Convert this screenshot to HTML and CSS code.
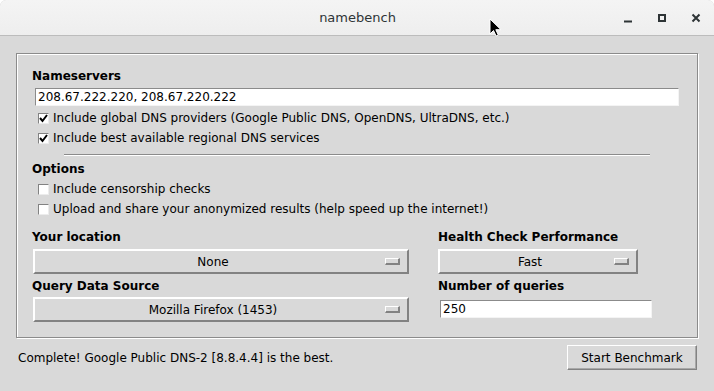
FILE: index.html
```html
<!DOCTYPE html>
<html lang="en">

<head>
    <meta charset="UTF-8">
    <title>namebench</title>
    <link rel="stylesheet" href="styles.css">
</head>

<body>
    <div class="titlebar">
        <span class="title">namebench</span>
        <div class="controls">
            <svg width="12" height="12" viewBox="0 0 12 12"><path d="M2 9.5h8" stroke="#2e3436" stroke-width="2" /></svg>
            <svg width="12" height="12" viewBox="0 0 12 12"><rect x="3" y="3" width="6" height="6" fill="none" stroke="#2e3436" stroke-width="2" /></svg>
            <svg width="12" height="12" viewBox="0 0 12 12"><path d="M2.5 2.5l7 7M9.5 2.5l-7 7" stroke="#2e3436" stroke-width="2" /></svg>
        </div>
        <svg class="cursor" width="13" height="19" viewBox="0 0 13 19">
            <path d="M1 1v15l3.5-3.5 2.6 5.5 2.2-1-2.5-5.3H12z" fill="#000" stroke="#fff" stroke-width="1" stroke-linejoin="round" />
        </svg>
    </div>

    <div class="window">
        <div class="frame">
            <div class="label">Nameservers</div>
            <div class="entry servers">208.67.222.220, 208.67.220.222</div>
            <div class="checks">
                <div class="check"><span class="box"><svg width="9" height="9" viewBox="0 0 9 9"><path d="M1 4l2.5 3L8 1" fill="none" stroke="#000" stroke-width="2" /></svg></span>Include global DNS providers (Google Public DNS, OpenDNS, UltraDNS, etc.)</div>
                <div class="check"><span class="box"><svg width="9" height="9" viewBox="0 0 9 9"><path d="M1 4l2.5 3L8 1" fill="none" stroke="#000" stroke-width="2" /></svg></span>Include best available regional DNS services</div>
            </div>
            <div class="separator"></div>
            <div class="label">Options</div>
            <div class="checks options">
                <div class="check"><span class="box"></span>Include censorship checks</div>
                <div class="check"><span class="box"></span>Upload and share your anonymized results (help speed up the internet!)</div>
            </div>
            <div class="settings">
                <div class="label">Your location</div>
                <div class="label">Health Check Performance</div>
                <div class="dropdown"><span class="value">None</span><span class="indicator"></span></div>
                <div class="dropdown small"><span class="value">Fast</span><span class="indicator"></span></div>
                <div class="label second">Query Data Source</div>
                <div class="label second">Number of queries</div>
                <div class="dropdown last"><span class="value">Mozilla Firefox (1453)</span><span class="indicator"></span></div>
                <div class="entry queries">250</div>
            </div>
        </div>
        <div class="statusbar">
            <span class="status">Complete! Google Public DNS-2 [8.8.4.4] is the best.</span>
            <button class="start">Start Benchmark</button>
        </div>
    </div>
</body>

</html>
```

FILE: styles.css
```css
html {
    background-color: #fff;
}

body {
    margin: 0;
    width: 714px;
    height: 391px;
    font-family: 'DejaVu Sans', sans-serif;
    font-size: 12px;
    color: #000;
    background-color: #d9d9d9;
    border-radius: 6px 6px 0 0;
    overflow: hidden;
}

/* title bar */
.titlebar {
    position: relative;
    height: 35px;
    display: flex;
    align-items: center;
    justify-content: center;
    background: linear-gradient(#f4f4f4, #eeeeee);
    border-bottom: 1px solid #bcbcbc;
    border-radius: 6px 6px 0 0;
}

.title {
    font-size: 13px;
    color: #2e3436;
    margin-left: 1px;
}

.controls {
    position: absolute;
    right: 12px;
    top: 12px;
    display: flex;
    gap: 22px;
}

.controls svg {
    display: block;
}

.cursor {
    position: absolute;
    left: 489px;
    top: 18px;
}

/* main frame */
.frame {
    box-sizing: border-box;
    height: 285px;
    margin: 17px 16px 0 16px;
    padding: 12px 0 0 15px;
    border: 1px solid #8b8b8b;
    box-shadow: inset 1px 1px #fff, 1px 1px #fff;
}

.label {
    font-weight: 700;
    line-height: 20px;
    height: 20px;
}

.entry {
    box-sizing: border-box;
    height: 18px;
    line-height: 16px;
    padding-left: 2px;
    background-color: #fff;
    border: 1px solid;
    border-color: #8b8b8b #f4f4f4 #f4f4f4 #8b8b8b;
}

.servers {
    width: 644px;
    margin: 2px 0 0 3px;
}

.checks {
    margin-top: 2px;
}

.checks.options {
    margin-top: 0;
}

.check {
    display: flex;
    align-items: center;
    height: 20px;
    padding-left: 6px;
    gap: 4px;
}

.box {
    box-sizing: border-box;
    width: 11px;
    height: 11px;
    display: flex;
    align-items: center;
    justify-content: center;
    background-color: #fff;
    border: 1px solid;
    border-color: #828282 #ececec #ececec #828282;
}

.box svg {
    display: block;
}

.separator {
    width: 586px;
    height: 1px;
    margin: 6px 0 3px 32px;
    background-color: #8b8b8b;
    border-bottom: 1px solid #fff;
}

.checks + .settings {
    margin-top: 8px;
}

.settings {
    display: grid;
    grid-template-columns: 377px 214px;
    column-gap: 29px;
    align-items: start;
}

.settings .second {
    margin-top: 2px;
}

.dropdown {
    box-sizing: border-box;
    height: 25px;
    margin: 2px 0 0 1px;
    display: flex;
    align-items: center;
    padding-right: 7px;
    border: 2px solid;
    border-color: #fff #828282 #828282 #fff;
}

.dropdown.last {
    margin-top: 1px;
}

.dropdown.small {
    width: 200px;
    margin-left: 0;
}

.value {
    flex: 1;
    text-align: center;
    padding-left: 6px;
}

.indicator {
    box-sizing: border-box;
    width: 15px;
    height: 7px;
    border: solid #828282;
    border-width: 1px 2px 2px 1px;
    border-color: #fff #828282 #828282 #fff;
}

.queries {
    width: 212px;
    margin: 4px 0 0 2px;
}

/* bottom row */
.statusbar {
    display: flex;
    align-items: center;
    justify-content: space-between;
    height: 25px;
    margin-top: 7px;
    padding: 0 17px 0 18px;
}

.start {
    box-sizing: border-box;
    width: 130px;
    height: 25px;
    padding: 0;
    font-family: 'DejaVu Sans', sans-serif;
    font-size: 12px;
    color: #000;
    background-color: #d9d9d9;
    border: 1px solid;
    border-color: #fff #828282 #828282 #fff;
    box-shadow: inset -1px -1px #a8a8a8;
}
```
